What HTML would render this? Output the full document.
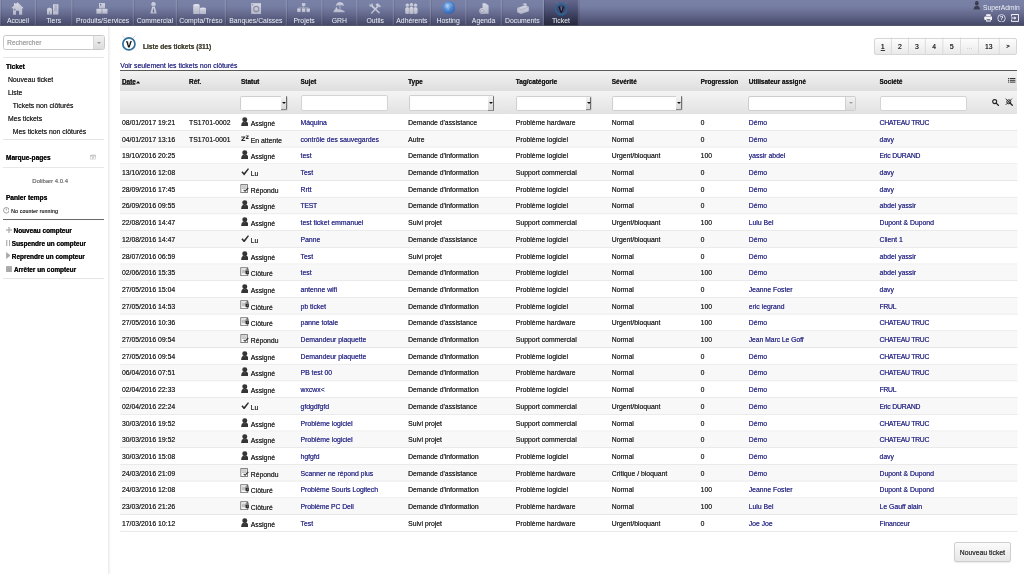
<!DOCTYPE html><html><head><meta charset="utf-8"><title>Tickets</title><style>
*{margin:0;padding:0;box-sizing:border-box}
html,body{width:1024px;height:574px;overflow:hidden;background:#fff}
body{font-family:"Liberation Sans",sans-serif;color:#303030;position:relative}
.t{position:absolute;white-space:nowrap;line-height:1.117;text-shadow:0.07px 0 0 currentColor}
#w{position:absolute;left:0;top:0;width:1024px;height:574px;will-change:transform;overflow:hidden;background:#fff}
.b{font-weight:bold}
.lk{color:#36368e}
.nv{color:#eef0f6}
.abs{position:absolute}
svg{position:absolute;left:0;top:0}
</style></head><body><div id="w">
<div class="abs" style="left:0;top:0;width:1024px;height:25.6px;background:linear-gradient(to bottom,#7981a6 0%,#767ea3 25%,#62678b 58%,#4c4f70 88%,#45475f 100%)"></div>
<div class="abs" style="left:544px;top:0;width:35px;height:25.6px;background:linear-gradient(to bottom,#62678b 0%,#50547a 30%,#383b58 65%,#25273a 100%)"></div>
<svg width="1024" height="26" style="top:0"><rect x="-0.19999999999999996" y="0" width="1.1" height="25" fill="#ffffff" opacity="0.17"/><rect x="0.9" y="0" width="0.9" height="25" fill="#000" opacity="0.10"/><rect x="34.8" y="0" width="1.1" height="25" fill="#ffffff" opacity="0.17"/><rect x="35.9" y="0" width="0.9" height="25" fill="#000" opacity="0.10"/><rect x="71.3" y="0" width="1.1" height="25" fill="#ffffff" opacity="0.17"/><rect x="72.4" y="0" width="0.9" height="25" fill="#000" opacity="0.10"/><rect x="132.8" y="0" width="1.1" height="25" fill="#ffffff" opacity="0.17"/><rect x="133.9" y="0" width="0.9" height="25" fill="#000" opacity="0.10"/><rect x="175.8" y="0" width="1.1" height="25" fill="#ffffff" opacity="0.17"/><rect x="176.9" y="0" width="0.9" height="25" fill="#000" opacity="0.10"/><rect x="224.8" y="0" width="1.1" height="25" fill="#ffffff" opacity="0.17"/><rect x="225.9" y="0" width="0.9" height="25" fill="#000" opacity="0.10"/><rect x="285.8" y="0" width="1.1" height="25" fill="#ffffff" opacity="0.17"/><rect x="286.9" y="0" width="0.9" height="25" fill="#000" opacity="0.10"/><rect x="321.3" y="0" width="1.1" height="25" fill="#ffffff" opacity="0.17"/><rect x="322.4" y="0" width="0.9" height="25" fill="#000" opacity="0.10"/><rect x="356.3" y="0" width="1.1" height="25" fill="#ffffff" opacity="0.17"/><rect x="357.4" y="0" width="0.9" height="25" fill="#000" opacity="0.10"/><rect x="392.8" y="0" width="1.1" height="25" fill="#ffffff" opacity="0.17"/><rect x="393.9" y="0" width="0.9" height="25" fill="#000" opacity="0.10"/><rect x="429.8" y="0" width="1.1" height="25" fill="#ffffff" opacity="0.17"/><rect x="430.9" y="0" width="0.9" height="25" fill="#000" opacity="0.10"/><rect x="465.3" y="0" width="1.1" height="25" fill="#ffffff" opacity="0.17"/><rect x="466.4" y="0" width="0.9" height="25" fill="#000" opacity="0.10"/><rect x="500.8" y="0" width="1.1" height="25" fill="#ffffff" opacity="0.17"/><rect x="501.9" y="0" width="0.9" height="25" fill="#000" opacity="0.10"/><rect x="542.8" y="0" width="1.1" height="25" fill="#ffffff" opacity="0.17"/><rect x="543.9" y="0" width="0.9" height="25" fill="#000" opacity="0.10"/><rect x="577.8" y="0" width="1.1" height="25" fill="#ffffff" opacity="0.17"/><rect x="578.9" y="0" width="0.9" height="25" fill="#000" opacity="0.10"/></svg>
<div class="abs" style="left:0;top:24.6px;width:1024px;height:1px;background:#5e6074;opacity:0.6"></div>
<span class="t nv" style="left:-4.60px;width:45px;text-align:center;top:17.00px;font-size:6.85px;text-shadow:none">Accueil</span>
<span class="t nv" style="left:30.40px;width:46.5px;text-align:center;top:17.00px;font-size:6.85px;text-shadow:none">Tiers</span>
<span class="t nv" style="left:66.90px;width:71.5px;text-align:center;top:17.00px;font-size:6.85px;text-shadow:none">Produits/Services</span>
<span class="t nv" style="left:128.40px;width:53px;text-align:center;top:17.00px;font-size:6.85px;text-shadow:none">Commercial</span>
<span class="t nv" style="left:171.40px;width:59px;text-align:center;top:17.00px;font-size:6.85px;text-shadow:none">Compta/Tréso</span>
<span class="t nv" style="left:220.40px;width:71px;text-align:center;top:17.00px;font-size:6.85px;text-shadow:none">Banques/Caisses</span>
<span class="t nv" style="left:281.40px;width:45.5px;text-align:center;top:17.00px;font-size:6.85px;text-shadow:none">Projets</span>
<span class="t nv" style="left:316.90px;width:45.0px;text-align:center;top:17.00px;font-size:6.85px;text-shadow:none">GRH</span>
<span class="t nv" style="left:351.90px;width:46.5px;text-align:center;top:17.00px;font-size:6.85px;text-shadow:none">Outils</span>
<span class="t nv" style="left:388.40px;width:47px;text-align:center;top:17.00px;font-size:6.85px;text-shadow:none">Adhérents</span>
<span class="t nv" style="left:425.40px;width:45.5px;text-align:center;top:17.00px;font-size:6.85px;text-shadow:none">Hosting</span>
<span class="t nv" style="left:460.90px;width:45.5px;text-align:center;top:17.00px;font-size:6.85px;text-shadow:none">Agenda</span>
<span class="t nv" style="left:496.40px;width:52px;text-align:center;top:17.00px;font-size:6.85px;text-shadow:none">Documents</span>
<span class="t nv" style="left:538.40px;width:45px;text-align:center;top:17.00px;font-size:6.85px;text-shadow:none">Ticket</span>
<svg width="0" height="0" style="position:absolute"><defs><linearGradient id="ng" x1="0" y1="0" x2="0" y2="1"><stop offset="0" stop-color="#ececf2"/><stop offset="1" stop-color="#c4c6d4"/></linearGradient></defs></svg><div style="position:absolute;left:0;top:0;opacity:0.82"><svg style="position:absolute;left:11px;top:1.5px;" width="13" height="13" viewBox="0 0 13 13"><path fill="url(#ng)" d="M6.5 0.3 L12.8 6.2 L11.2 6.2 L11.2 12.8 L8 12.8 L8 8.8 L5 8.8 L5 12.8 L2 12.8 L2 6.2 L0.2 6.2 L3 3.6 L3 1 L4.5 1 L4.5 2.2 Z"/><rect x="2.6" y="6.8" width="2" height="1.6" fill="#8c90aa"/></svg><svg style="position:absolute;left:47px;top:3.5px;" width="12" height="11" viewBox="0 0 12 11"><rect fill="url(#ng)" x="6" y="0.3" width="5.4" height="10.3"/><path fill="url(#ng)" d="M0 10.6 L0 4.8 L2.5 3.6 L5 4.8 L5 10.6 Z"/><rect x="7.3" y="1.6" width="2.8" height="1" fill="#9a9db5"/><rect x="7.3" y="3.6" width="2.8" height="1" fill="#9a9db5"/><rect x="7.3" y="5.6" width="2.8" height="1" fill="#9a9db5"/><rect x="2" y="7.5" width="1" height="3" fill="#9a9db5"/></svg><svg style="position:absolute;left:95.5px;top:3.3px;" width="12" height="11" viewBox="0 0 12 11"><rect fill="url(#ng)" x="3" y="0.2" width="6" height="5.2"/><rect x="4" y="1.2" width="1.3" height="1.2" fill="#555a78"/><rect fill="url(#ng)" x="0.4" y="5.8" width="5.3" height="4.9"/><rect fill="url(#ng)" x="6.2" y="5.8" width="5.3" height="4.9"/></svg><svg style="position:absolute;left:150.3px;top:1.8px;" width="7" height="12" viewBox="0 0 7 12"><circle fill="url(#ng)" cx="3.5" cy="2.3" r="2.2"/><path fill="url(#ng)" d="M2.2 4.8 L4.8 4.8 L6.8 11.6 L0.2 11.6 Z"/><path d="M3.5 5.3 L4.3 9.5 L3.5 11 L2.7 9.5 Z" fill="#6a6f8e"/></svg><svg style="position:absolute;left:193.3px;top:3.8px;" width="13.2" height="10.5" viewBox="0 0 13.2 10.5"><rect fill="url(#ng)" x="0.2" y="0.8" width="6.5" height="9.5" rx="1"/><ellipse cx="3.45" cy="1" rx="3.2" ry="0.9" fill="#f8f8fb"/><rect fill="url(#ng)" x="6.8" y="4" width="6.2" height="6.3" rx="1"/><ellipse cx="9.9" cy="4.2" rx="3" ry="0.8" fill="#f8f8fb"/></svg><svg style="position:absolute;left:250.8px;top:2.8px;" width="10.6" height="11.4" viewBox="0 0 10.6 11.4"><rect fill="url(#ng)" x="0.2" y="0.2" width="10.2" height="11"/><circle cx="5.3" cy="6" r="2.6" fill="none" stroke="#8d90a8" stroke-width="1.1"/><circle cx="1.8" cy="1.8" r="0.6" fill="#6d7190"/></svg><svg style="position:absolute;left:297.4px;top:3.3px;" width="13" height="9.3" viewBox="0 0 13 9.3"><rect fill="url(#ng)" x="4.9" y="0.2" width="3.4" height="3"/><rect x="6.3" y="3" width="0.6" height="2" fill="#c8cad6"/><rect x="1.5" y="4.6" width="10" height="0.6" fill="#c8cad6"/><rect fill="url(#ng)" x="0.2" y="5.5" width="3.4" height="3.6"/><rect fill="url(#ng)" x="4.9" y="5.5" width="3.4" height="3.6"/><rect fill="url(#ng)" x="9.5" y="5.5" width="3.4" height="3.6"/></svg><svg style="position:absolute;left:332.8px;top:2.4px;" width="12" height="10.4" viewBox="0 0 12 10.4"><path fill="url(#ng)" d="M3 3.8 Q3.2 0.2 7 0.2 Q10.8 0.2 11 3.8 Q7 2.8 3 3.8 Z"/><rect x="6.6" y="3.2" width="0.7" height="4.2" fill="#d8d9e4"/><path fill="url(#ng)" d="M0.2 10.2 Q0.8 7.6 2.4 7.2 L2.8 5.6 Q3.6 5 4.2 6 L4.4 7.2 Q8 6.8 11.6 9.2 L11.8 10.2 Z"/></svg><svg style="position:absolute;left:368.5px;top:3.3px;" width="12.2" height="10.8" viewBox="0 0 12.2 10.8"><path d="M2.2 2.4 L10.6 10.2" stroke="url(#ng)" stroke-width="1.6"/><path d="M1 0.6 Q-0.4 2.6 1.4 3.8 Q3 4.4 3.8 3 Q4.6 1.2 2.6 0.2 L2.4 1.8 L1.4 2 Z" fill="url(#ng)"/><path d="M9.6 2.6 L2.2 10.4" stroke="url(#ng)" stroke-width="1.5"/><path fill="url(#ng)" d="M6.6 1.6 L8.6 0.2 L12 3.2 L10.8 4.6 L9.4 3.6 L8.4 4.2 Z"/></svg><svg style="position:absolute;left:405.3px;top:2.5px;" width="12.8" height="11.4" viewBox="0 0 12.8 11.4"><circle fill="url(#ng)" cx="2.3" cy="2.3" r="1.7"/><circle fill="url(#ng)" cx="10.5" cy="2.3" r="1.7"/><rect fill="url(#ng)" x="0.2" y="4.3" width="4.2" height="6.6" rx="1.6"/><rect fill="url(#ng)" x="8.4" y="4.3" width="4.2" height="6.6" rx="1.6"/><circle fill="url(#ng)" cx="6.4" cy="1.9" r="1.8"/><rect fill="url(#ng)" x="4.2" y="4" width="4.4" height="7.2" rx="1.7"/><path d="M4.2 4.6 L4.2 10 M8.6 4.6 L8.6 10" stroke="#8a8eaa" stroke-width="0.4"/></svg><svg style="position:absolute;left:441.8px;top:0.8px;" width="13.6" height="13.6" viewBox="0 0 13.6 13.6"><defs><radialGradient id="gl" cx="0.4" cy="0.35" r="0.7"><stop offset="0" stop-color="#c4e2ff"/><stop offset="0.45" stop-color="#4a90e2"/><stop offset="1" stop-color="#2a5cb0"/></radialGradient></defs><circle cx="6.8" cy="6.8" r="6.4" fill="url(#gl)"/><path d="M4 3 Q6 4 5 6 Q7 7 6 9.5 M8.5 2.5 Q9.5 4.5 10.5 5" stroke="#c8e0f8" stroke-width="0.6" fill="none" opacity="0.8"/></svg><svg style="position:absolute;left:478.5px;top:2.5px;" width="10" height="11.4" viewBox="0 0 10 11.4"><path fill="url(#ng)" d="M3.5 0.3 L6.5 0.3 L9.6 2.5 L9.6 10.8 L3.5 10.8 Z"/><circle fill="url(#ng)" cx="3.2" cy="8" r="2.9"/><circle cx="3.2" cy="8" r="1.8" fill="none" stroke="#9a9db5" stroke-width="0.6"/></svg><svg style="position:absolute;left:516.8px;top:2.5px;" width="12" height="11.4" viewBox="0 0 12 11.4"><path fill="url(#ng)" d="M0.2 5 L8 2.2 L11.8 4 L11.8 8.2 L4 11 L0.2 9.2 Z"/><path d="M5 1 L9 0.3 L10 2.8" fill="#e8e8ee"/><path d="M0.2 5 L4 6.8 L11.8 4" stroke="#a6a9bf" stroke-width="0.5" fill="none"/></svg></div><svg style="position:absolute;left:551.8px;top:-0.2px;" width="18.6" height="18.6" viewBox="0 0 18.6 18.6"><circle cx="9.3" cy="9.3" r="5.45" fill="#464a6a" stroke="#2a6598" stroke-width="1.7"/><path d="M6.4 6.4 L7.800000000000001 6.4 L9.3 10.9 L10.8 6.4 L12.200000000000001 6.4 L10.100000000000001 12.8 L8.5 12.8 Z" fill="#14142a"/><path d="M9.3 7.1000000000000005 L9.3 10.5" stroke="#8a8fb0" stroke-width="0.7"/><path d="M3.400000000000001 1.600000000000001 L6.000000000000001 4.300000000000001 M15.200000000000001 1.600000000000001 L12.600000000000001 4.300000000000001" stroke="#7c809c" stroke-width="0.55" opacity="0.8"/></svg>
<span class="t nv" style="left:983.00px;top:4.14px;font-size:6.7px;text-shadow:none">SuperAdmin</span>
<div class="abs" style="left:108px;top:25.6px;width:3.2px;height:549px;background:linear-gradient(to right,#e9e9e9,#f3f3f3 40%,#ffffff)"></div>
<div class="abs" style="left:3.3px;top:35.3px;width:101.4px;height:14.5px;border:1px solid #c8c8c8;border-radius:2.5px;background:#fff;overflow:hidden"><div class="abs" style="right:0;top:0;width:11px;height:100%;background:linear-gradient(#f0f0f0,#dcdcdc);border-left:1px solid #d8d8d8"></div></div>
<div class="abs" style="left:96.7px;top:41.8px;width:0;height:0;border-left:2px solid transparent;border-right:2px solid transparent;border-top:2.6px solid #9a9a9a"></div>
<span class="t " style="left:7.10px;top:38.89px;font-size:6.64px;color:#a8a8a8">Rechercher</span>
<div class="abs" style="left:3px;top:57px;width:101px;height:1px;background:#e4e4e4"></div>
<span class="t b" style="left:6.00px;top:62.88px;font-size:6.54px;color:#111">Ticket</span>
<span class="t " style="left:7.90px;top:76.00px;font-size:6.85px;">Nouveau ticket</span>
<span class="t " style="left:7.90px;top:88.90px;font-size:6.85px;">Liste</span>
<span class="t " style="left:12.80px;top:101.80px;font-size:6.85px;">Tickets non clôturés</span>
<span class="t " style="left:7.90px;top:114.80px;font-size:6.85px;">Mes tickets</span>
<span class="t " style="left:12.80px;top:127.70px;font-size:6.85px;">Mes tickets non clôturés</span>
<div class="abs" style="left:3px;top:139px;width:101px;height:1px;background:#e4e4e4"></div>
<span class="t b" style="left:5.90px;top:154.13px;font-size:6.6px;color:#111">Marque-pages</span>
<div class="abs" style="left:3px;top:167px;width:101px;height:1px;background:#e8e8e8"></div>
<span class="t " style="left:32.30px;top:177.62px;font-size:5.95px;color:#7a7a7a">Dolibarr 4.0.4</span>
<span class="t b" style="left:5.90px;top:194.43px;font-size:6.6px;color:#111">Panier temps</span>
<span class="t " style="left:11.10px;top:209.00px;font-size:5.3px;letter-spacing:0.1px;color:#333">No counter running</span>
<div class="abs" style="left:3px;top:219px;width:101px;height:1px;background:#6a6a6a"></div>
<span class="t b" style="left:13.50px;top:227.16px;font-size:6.45px;color:#111">Nouveau compteur</span>
<span class="t b" style="left:11.80px;top:240.26px;font-size:6.45px;color:#111">Suspendre un compteur</span>
<span class="t b" style="left:11.80px;top:253.26px;font-size:6.45px;color:#111">Reprendre un compteur</span>
<span class="t b" style="left:13.90px;top:265.76px;font-size:6.45px;color:#111">Arrêter un compteur</span>
<div class="abs" style="left:3px;top:278px;width:101px;height:1px;background:#e4e4e4"></div>
<span class="t b" style="left:143.00px;top:42.83px;font-size:6.6px;color:#4a4838">Liste des tickets (311)</span>
<svg style="position:absolute;left:119.2px;top:34.0px;" width="19.8" height="19.8" viewBox="0 0 19.8 19.8"><circle cx="9.9" cy="9.9" r="6.050000000000001" fill="#ffffff" stroke="#2f6f9f" stroke-width="1.7"/><path d="M7.0 7.0 L8.4 7.0 L9.9 11.5 L11.4 7.0 L12.8 7.0 L10.700000000000001 13.4 L9.1 13.4 Z" fill="#1a1a1a"/><path d="M9.9 7.7 L9.9 11.1" stroke="#9a9a9a" stroke-width="0.7"/><path d="M3.4 1.6 L6.0 4.3 M16.400000000000002 1.6 L13.8 4.3" stroke="#9a9a9a" stroke-width="0.55" opacity="0.8"/></svg>
<div class="abs" style="left:874.2px;top:37.5px;width:142.6px;height:17.2px;border:1px solid #d6d6d6;border-radius:2px;background:linear-gradient(#fdfdfd,#e9e9e9)"></div>
<svg width="1024" height="60" style="top:0"><rect x="890.9" y="37.5" width="0.8" height="17.2" fill="#d6d6d6"/><rect x="908.1" y="37.5" width="0.8" height="17.2" fill="#d6d6d6"/><rect x="924.85" y="37.5" width="0.8" height="17.2" fill="#d6d6d6"/><rect x="942.5" y="37.5" width="0.8" height="17.2" fill="#d6d6d6"/><rect x="960.2" y="37.5" width="0.8" height="17.2" fill="#d6d6d6"/><rect x="978.0" y="37.5" width="0.8" height="17.2" fill="#d6d6d6"/><rect x="998.8000000000001" y="37.5" width="0.8" height="17.2" fill="#d6d6d6"/></svg>
<span class="t " style="left:874.20px;width:17.09999999999991px;text-align:center;top:42.60px;font-size:6.85px;color:#333;text-decoration:underline">1</span>
<span class="t " style="left:891.30px;width:17.200000000000045px;text-align:center;top:42.60px;font-size:6.85px;color:#333">2</span>
<span class="t " style="left:908.50px;width:16.75px;text-align:center;top:42.60px;font-size:6.85px;color:#333">3</span>
<span class="t " style="left:925.25px;width:17.649999999999977px;text-align:center;top:42.60px;font-size:6.85px;color:#333">4</span>
<span class="t " style="left:942.90px;width:17.700000000000045px;text-align:center;top:42.60px;font-size:6.85px;color:#333">5</span>
<span class="t " style="left:960.60px;width:17.799999999999955px;text-align:center;top:42.60px;font-size:6.85px;color:#c8c8c8">...</span>
<span class="t " style="left:978.40px;width:20.800000000000068px;text-align:center;top:42.60px;font-size:6.85px;color:#333">13</span>
<span class="t b" style="left:999.20px;width:17.59999999999991px;text-align:center;top:43.33px;font-size:5.6px;color:#333">&gt;</span>
<span class="t lk" style="left:120.20px;top:61.96px;font-size:6.9px;">Voir seulement les tickets non clôturés</span>
<div class="abs" style="left:120.2px;top:70px;width:897.1999999999999px;height:1px;background:#5a5a5a"></div>
<div class="abs" style="left:120.2px;top:71px;width:897.1999999999999px;height:19.7px;background:linear-gradient(#f2f2f2,#dedede)"></div>
<div class="abs" style="left:120.2px;top:90.7px;width:897.1999999999999px;height:23.6px;background:linear-gradient(#f4f4f4,#e2e2e2)"></div>
<span class="t b" style="left:121.90px;top:78.37px;font-size:6.44px;color:#222">Date</span>
<span class="t b" style="left:189.00px;top:78.37px;font-size:6.44px;color:#222">Réf.</span>
<span class="t b" style="left:241.00px;top:78.37px;font-size:6.44px;color:#222">Statut</span>
<span class="t b" style="left:300.50px;top:78.37px;font-size:6.44px;color:#222">Sujet</span>
<span class="t b" style="left:408.10px;top:78.37px;font-size:6.44px;color:#222">Type</span>
<span class="t b" style="left:515.80px;top:78.37px;font-size:6.44px;color:#222">Tag/catégorie</span>
<span class="t b" style="left:611.70px;top:78.37px;font-size:6.44px;color:#222">Sévérité</span>
<span class="t b" style="left:700.60px;top:78.37px;font-size:6.44px;color:#222">Progression</span>
<span class="t b" style="left:748.70px;top:78.37px;font-size:6.44px;color:#222">Utilisateur assigné</span>
<span class="t b" style="left:879.50px;top:78.37px;font-size:6.44px;color:#222">Société</span>
<div style="position:absolute;left:240.4px;top:95.5px;width:47.20px;height:15.40px;background:#fff;border:1px solid #cfcfcf;border-radius:1.5px;box-shadow:inset 0 0 1px #e6e6e6"></div><div style="position:absolute;left:281.00px;top:96.30px;width:5.8px;height:13.80px;background:linear-gradient(#f4f4f4,#d8d8d8);border-right:1.3px solid #6e6e6e;border-bottom:1px solid #8a8a8a;border-radius:0 1px 1px 0"></div><div style="position:absolute;left:282.10px;top:102.10px;width:0;height:0;border-left:2.1px solid transparent;border-right:2.1px solid transparent;border-top:2.6px solid #111"></div>
<div style="position:absolute;left:300.7px;top:95.4px;width:87.00px;height:15.20px;background:#fff;border:1px solid #d4d4d4;border-radius:2px"></div>
<div style="position:absolute;left:408.6px;top:95.4px;width:85.90px;height:16.10px;background:#fff;border:1px solid #cfcfcf;border-radius:1.5px;box-shadow:inset 0 0 1px #e6e6e6"></div><div style="position:absolute;left:487.90px;top:96.20px;width:5.8px;height:14.50px;background:linear-gradient(#f4f4f4,#d8d8d8);border-right:1.3px solid #6e6e6e;border-bottom:1px solid #8a8a8a;border-radius:0 1px 1px 0"></div><div style="position:absolute;left:489.00px;top:102.35px;width:0;height:0;border-left:2.1px solid transparent;border-right:2.1px solid transparent;border-top:2.6px solid #111"></div>
<div style="position:absolute;left:515.8px;top:95.7px;width:76.50px;height:15.20px;background:#fff;border:1px solid #cfcfcf;border-radius:1.5px;box-shadow:inset 0 0 1px #e6e6e6"></div><div style="position:absolute;left:585.70px;top:96.50px;width:5.8px;height:13.60px;background:linear-gradient(#f4f4f4,#d8d8d8);border-right:1.3px solid #6e6e6e;border-bottom:1px solid #8a8a8a;border-radius:0 1px 1px 0"></div><div style="position:absolute;left:586.80px;top:102.20px;width:0;height:0;border-left:2.1px solid transparent;border-right:2.1px solid transparent;border-top:2.6px solid #111"></div>
<div style="position:absolute;left:611.5px;top:95.6px;width:71.10px;height:15.50px;background:#fff;border:1px solid #cfcfcf;border-radius:1.5px;box-shadow:inset 0 0 1px #e6e6e6"></div><div style="position:absolute;left:676.00px;top:96.40px;width:5.8px;height:13.90px;background:linear-gradient(#f4f4f4,#d8d8d8);border-right:1.3px solid #6e6e6e;border-bottom:1px solid #8a8a8a;border-radius:0 1px 1px 0"></div><div style="position:absolute;left:677.10px;top:102.25px;width:0;height:0;border-left:2.1px solid transparent;border-right:2.1px solid transparent;border-top:2.6px solid #111"></div>
<div style="position:absolute;left:748.3px;top:96.1px;width:107.30px;height:14.70px;background:#fff;border:1px solid #cdcdcd;border-radius:2px;overflow:hidden"><div style="position:absolute;right:0;top:0;width:10px;height:100%;background:linear-gradient(#f2f2f2,#dcdcdc);border-left:1px solid #d0d0d0"></div></div><div style="position:absolute;left:848.80px;top:102.45px;width:0;height:0;border-left:2.2px solid transparent;border-right:2.2px solid transparent;border-top:2.8px solid #a0a0a0"></div>
<div style="position:absolute;left:880px;top:95.6px;width:87.40px;height:15.30px;background:#fff;border:1px solid #d4d4d4;border-radius:2px"></div>
<svg style="position:absolute;left:1008px;top:77.8px;" width="7.6" height="4.8" viewBox="0 0 7.6 4.8"><rect x="0" y="0" width="1.3" height="1" fill="#333"/><rect x="0" y="1.8" width="1.3" height="1" fill="#333"/><rect x="0" y="3.6" width="1.3" height="1" fill="#333"/><rect x="2" y="0" width="5.4" height="1" fill="#333"/><rect x="2" y="1.8" width="5.4" height="1" fill="#333"/><rect x="2" y="3.6" width="5.4" height="1" fill="#333"/></svg><svg style="position:absolute;left:991.5px;top:98.6px;" width="7.6" height="7.2" viewBox="0 0 7.6 7.2"><circle cx="2.7" cy="2.6" r="2" fill="none" stroke="#222" stroke-width="1.1"/><path d="M4.2 4.1 L6.9 6.8" stroke="#222" stroke-width="1.3"/></svg><svg style="position:absolute;left:1005px;top:97.6px;" width="8" height="8" viewBox="0 0 8 8"><circle cx="3.8" cy="3.8" r="2" fill="none" stroke="#222" stroke-width="1"/><path d="M0.6 0.6 L7.4 7.4 M7 0.6 L0.6 7" stroke="#222" stroke-width="0.8"/><path d="M5.3 5.3 L7.6 7.6" stroke="#222" stroke-width="1.3"/></svg><svg style="position:absolute;left:135.9px;top:81.3px;" width="4.2" height="2.6" viewBox="0 0 4.2 2.6"><path d="M0 2.5 L2.1 0 L4.2 2.5 Z" fill="#111"/></svg><svg style="position:absolute;left:972.8px;top:1px;" width="7.6" height="8.8" viewBox="0 0 7.6 8.8"><circle cx="3.8" cy="2.6" r="1.9" fill="#3b3e4e"/><path d="M0.6 8.6 Q0.8 5 3.8 4.8 Q6.8 5 7 8.6 Z" fill="#3b3e4e"/><path d="M2.2 1.2 Q3.8 -0.5 5.4 1.2" stroke="#2a2c38" stroke-width="0.8" fill="none"/></svg><svg style="position:absolute;left:983.6px;top:14.2px;" width="8.8" height="7.8" viewBox="0 0 8.8 7.8"><rect x="2.2" y="0.2" width="4.4" height="1.8" fill="#f2f2f6"/><rect x="0.2" y="2.4" width="8.4" height="3.6" rx="1" fill="#f2f2f6"/><rect x="2" y="5" width="4.8" height="2.6" fill="#f2f2f6"/><rect x="2.6" y="5.2" width="3.6" height="1.3" fill="#5a5e7c"/></svg><svg style="position:absolute;left:997px;top:13.8px;" width="9" height="8.6" viewBox="0 0 9 8.6"><circle cx="4.5" cy="4.3" r="3.75" fill="none" stroke="#eeeef4" stroke-width="0.8"/><text x="4.55" y="6.5" font-family="Liberation Sans" font-weight="bold" font-size="6" text-anchor="middle" fill="#eeeef4">?</text></svg><svg style="position:absolute;left:1010.8px;top:14.2px;" width="8.2" height="8" viewBox="0 0 8.2 8"><path d="M0.5 2.5 L0.5 0.5 L7.6 0.5 L7.6 7.4 L0.5 7.4 L0.5 5.5" fill="none" stroke="#f2f2f6" stroke-width="1"/><path d="M0.2 4 L4.5 4" stroke="#f2f2f6" stroke-width="1"/><path d="M3.4 2.2 L5.4 4 L3.4 5.8 Z" fill="#f2f2f6"/></svg><svg style="position:absolute;left:89.8px;top:154.4px;" width="6.2" height="5.4" viewBox="0 0 6.2 5.4"><rect x="0.5" y="1.5" width="5.2" height="3.6" fill="none" stroke="#c4c4c4" stroke-width="0.6"/><rect x="0.5" y="1.5" width="5.2" height="1" fill="#b8b8b8"/><rect x="2" y="3" width="2" height="1.6" fill="#c8c8c8"/><path d="M0.5 0.4 L5.7 0.4" stroke="#d4d4d4" stroke-width="0.5"/></svg><svg style="position:absolute;left:2.6px;top:207px;" width="6.6" height="6.6" viewBox="0 0 6.6 6.6"><circle cx="3.3" cy="3.3" r="2.8" fill="none" stroke="#666" stroke-width="0.6"/><path d="M3.3 1.5 L3.3 3.5" stroke="#666" stroke-width="0.6"/></svg><svg style="position:absolute;left:5.5px;top:227px;" width="6" height="6" viewBox="0 0 6 6"><rect x="2.4" y="0" width="1.2" height="6" fill="#a8a8a8"/><rect x="0" y="2.4" width="6" height="1.2" fill="#a8a8a8"/></svg><svg style="position:absolute;left:5.5px;top:239.7px;" width="4.4" height="6.4" viewBox="0 0 4.4 6.4"><rect x="0.2" y="0" width="1.1" height="6.4" fill="#a8a8a8"/><rect x="3" y="0" width="1.1" height="6.4" fill="#a8a8a8"/></svg><svg style="position:absolute;left:5.5px;top:252.2px;" width="4.6" height="7" viewBox="0 0 4.6 7"><path d="M0.1 0 L4.5 3.5 L0.1 7 Z" fill="#a8a8a8"/></svg><svg style="position:absolute;left:5.5px;top:265.6px;" width="6" height="6.2" viewBox="0 0 6 6.2"><rect x="0.1" y="0.1" width="5.8" height="6" fill="#a8a8a8"/></svg>
<svg width="1024" height="100" style="top:0"><rect x="121.8" y="84.1" width="13.6" height="0.75" fill="#2a2a2a"/></svg>
<svg width="1024" height="574" style="top:0"><rect x="120.2" y="114.20" width="897.20" height="16.7" fill="#ffffff"/><rect x="120.2" y="130.10" width="897.20" height="0.8" fill="#e2e2e2"/><rect x="120.2" y="130.90" width="897.20" height="16.7" fill="#f8f8f8"/><rect x="120.2" y="146.80" width="897.20" height="0.8" fill="#e2e2e2"/><rect x="120.2" y="147.60" width="897.20" height="16.7" fill="#ffffff"/><rect x="120.2" y="163.50" width="897.20" height="0.8" fill="#e2e2e2"/><rect x="120.2" y="164.30" width="897.20" height="16.7" fill="#f8f8f8"/><rect x="120.2" y="180.20" width="897.20" height="0.8" fill="#e2e2e2"/><rect x="120.2" y="181.00" width="897.20" height="16.7" fill="#ffffff"/><rect x="120.2" y="196.90" width="897.20" height="0.8" fill="#e2e2e2"/><rect x="120.2" y="197.70" width="897.20" height="16.7" fill="#f8f8f8"/><rect x="120.2" y="213.60" width="897.20" height="0.8" fill="#e2e2e2"/><rect x="120.2" y="214.40" width="897.20" height="16.7" fill="#ffffff"/><rect x="120.2" y="230.30" width="897.20" height="0.8" fill="#e2e2e2"/><rect x="120.2" y="231.10" width="897.20" height="16.7" fill="#f8f8f8"/><rect x="120.2" y="247.00" width="897.20" height="0.8" fill="#e2e2e2"/><rect x="120.2" y="247.80" width="897.20" height="16.7" fill="#ffffff"/><rect x="120.2" y="263.70" width="897.20" height="0.8" fill="#e2e2e2"/><rect x="120.2" y="264.50" width="897.20" height="16.7" fill="#f8f8f8"/><rect x="120.2" y="280.40" width="897.20" height="0.8" fill="#e2e2e2"/><rect x="120.2" y="281.20" width="897.20" height="16.7" fill="#ffffff"/><rect x="120.2" y="297.10" width="897.20" height="0.8" fill="#e2e2e2"/><rect x="120.2" y="297.90" width="897.20" height="16.7" fill="#f8f8f8"/><rect x="120.2" y="313.80" width="897.20" height="0.8" fill="#e2e2e2"/><rect x="120.2" y="314.60" width="897.20" height="16.7" fill="#ffffff"/><rect x="120.2" y="330.50" width="897.20" height="0.8" fill="#e2e2e2"/><rect x="120.2" y="331.30" width="897.20" height="16.7" fill="#f8f8f8"/><rect x="120.2" y="347.20" width="897.20" height="0.8" fill="#e2e2e2"/><rect x="120.2" y="348.00" width="897.20" height="16.7" fill="#ffffff"/><rect x="120.2" y="363.90" width="897.20" height="0.8" fill="#e2e2e2"/><rect x="120.2" y="364.70" width="897.20" height="16.7" fill="#f8f8f8"/><rect x="120.2" y="380.60" width="897.20" height="0.8" fill="#e2e2e2"/><rect x="120.2" y="381.40" width="897.20" height="16.7" fill="#ffffff"/><rect x="120.2" y="397.30" width="897.20" height="0.8" fill="#e2e2e2"/><rect x="120.2" y="398.10" width="897.20" height="16.7" fill="#f8f8f8"/><rect x="120.2" y="414.00" width="897.20" height="0.8" fill="#e2e2e2"/><rect x="120.2" y="414.80" width="897.20" height="16.7" fill="#ffffff"/><rect x="120.2" y="430.70" width="897.20" height="0.8" fill="#e2e2e2"/><rect x="120.2" y="431.50" width="897.20" height="16.7" fill="#f8f8f8"/><rect x="120.2" y="447.40" width="897.20" height="0.8" fill="#e2e2e2"/><rect x="120.2" y="448.20" width="897.20" height="16.7" fill="#ffffff"/><rect x="120.2" y="464.10" width="897.20" height="0.8" fill="#e2e2e2"/><rect x="120.2" y="464.90" width="897.20" height="16.7" fill="#f8f8f8"/><rect x="120.2" y="480.80" width="897.20" height="0.8" fill="#e2e2e2"/><rect x="120.2" y="481.60" width="897.20" height="16.7" fill="#ffffff"/><rect x="120.2" y="497.50" width="897.20" height="0.8" fill="#e2e2e2"/><rect x="120.2" y="498.30" width="897.20" height="16.7" fill="#f8f8f8"/><rect x="120.2" y="514.20" width="897.20" height="0.8" fill="#e2e2e2"/><rect x="120.2" y="515.00" width="897.20" height="16.7" fill="#ffffff"/><rect x="120.2" y="530.90" width="897.20" height="0.8" fill="#e2e2e2"/></svg>
<span class="t " style="left:121.90px;top:118.90px;font-size:6.85px;">08/01/2017 19:21</span>
<span class="t " style="left:189.00px;top:118.90px;font-size:6.85px;">TS1701-0002</span>
<span class="t " style="left:250.70px;top:119.90px;font-size:6.85px;">Assigné</span>
<svg style="position:absolute;left:240.8px;top:116.9px;" width="7.6" height="9.2" viewBox="0 0 7.6 9.2"><circle cx="3.8" cy="2.7" r="2.5" fill="#353535"/><path d="M0.1 9.1 Q0.2 5.6 2 4.8 Q3.8 5.8 5.6 4.8 Q7.4 5.6 7.5 9.1 Z" fill="#353535"/></svg>
<span class="t lk" style="left:300.50px;top:118.90px;font-size:6.85px;">Máquina</span>
<span class="t " style="left:408.10px;top:118.90px;font-size:6.85px;">Demande d'assistance</span>
<span class="t " style="left:515.80px;top:118.90px;font-size:6.85px;">Problème hardware</span>
<span class="t " style="left:611.70px;top:118.90px;font-size:6.85px;">Normal</span>
<span class="t " style="left:700.60px;top:118.90px;font-size:6.85px;">0</span>
<span class="t lk" style="left:748.70px;top:118.90px;font-size:6.85px;">Démo</span>
<span class="t lk" style="left:879.50px;top:118.90px;font-size:6.85px;;letter-spacing:-0.284px">CHATEAU TRUC</span>
<span class="t " style="left:121.90px;top:135.60px;font-size:6.85px;">04/01/2017 13:16</span>
<span class="t " style="left:189.00px;top:135.60px;font-size:6.85px;">TS1701-0001</span>
<span class="t " style="left:250.70px;top:136.60px;font-size:6.85px;">En attente</span>
<svg style="position:absolute;left:240.8px;top:134.70000000000002px;" width="8.4" height="7" viewBox="0 0 8.4 7"><path d="M0.30 1.40 L4.20 1.40 L4.20 2.50 L1.84 5.00 L4.20 5.00 L4.20 6.10 L0.30 6.10 L0.30 5.00 L2.66 2.50 L0.30 2.50 Z" fill="#2e2e2e"/><path d="M4.90 0.40 L7.70 0.40 L7.70 1.25 L6.09 3.05 L7.70 3.05 L7.70 3.90 L4.90 3.90 L4.90 3.05 L6.51 1.25 L4.90 1.25 Z" fill="#2e2e2e"/></svg>
<span class="t lk" style="left:300.50px;top:135.60px;font-size:6.85px;">contrôle des sauvegardes</span>
<span class="t " style="left:408.10px;top:135.60px;font-size:6.85px;">Autre</span>
<span class="t " style="left:515.80px;top:135.60px;font-size:6.85px;">Problème logiciel</span>
<span class="t " style="left:611.70px;top:135.60px;font-size:6.85px;">Normal</span>
<span class="t " style="left:700.60px;top:135.60px;font-size:6.85px;">0</span>
<span class="t lk" style="left:748.70px;top:135.60px;font-size:6.85px;">Démo</span>
<span class="t lk" style="left:879.50px;top:135.60px;font-size:6.85px;">davy</span>
<span class="t " style="left:121.90px;top:152.30px;font-size:6.85px;">19/10/2016 20:25</span>
<span class="t " style="left:250.70px;top:153.30px;font-size:6.85px;">Assigné</span>
<svg style="position:absolute;left:240.8px;top:150.29999999999998px;" width="7.6" height="9.2" viewBox="0 0 7.6 9.2"><circle cx="3.8" cy="2.7" r="2.5" fill="#353535"/><path d="M0.1 9.1 Q0.2 5.6 2 4.8 Q3.8 5.8 5.6 4.8 Q7.4 5.6 7.5 9.1 Z" fill="#353535"/></svg>
<span class="t lk" style="left:300.50px;top:152.30px;font-size:6.85px;">test</span>
<span class="t " style="left:408.10px;top:152.30px;font-size:6.85px;">Demande d'information</span>
<span class="t " style="left:515.80px;top:152.30px;font-size:6.85px;">Problème logiciel</span>
<span class="t " style="left:611.70px;top:152.30px;font-size:6.85px;">Urgent/bloquant</span>
<span class="t " style="left:700.60px;top:152.30px;font-size:6.85px;">100</span>
<span class="t lk" style="left:748.70px;top:152.30px;font-size:6.85px;">yassir abdel</span>
<span class="t lk" style="left:879.50px;top:152.30px;font-size:6.85px;;letter-spacing:-0.197px">Eric DURAND</span>
<span class="t " style="left:121.90px;top:169.00px;font-size:6.85px;">13/10/2016 12:08</span>
<span class="t " style="left:250.70px;top:170.00px;font-size:6.85px;">Lu</span>
<svg style="position:absolute;left:240.8px;top:167.9px;" width="8.2" height="7.8" viewBox="0 0 8.2 7.8"><path d="M0.4 4.2 L1.6 3.3 L3 5 L7 0.2 L8 0.9 L3.2 7.6 Z" fill="#2a2a2a"/></svg>
<span class="t lk" style="left:300.50px;top:169.00px;font-size:6.85px;">Test</span>
<span class="t " style="left:408.10px;top:169.00px;font-size:6.85px;">Demande d'information</span>
<span class="t " style="left:515.80px;top:169.00px;font-size:6.85px;">Support commercial</span>
<span class="t " style="left:611.70px;top:169.00px;font-size:6.85px;">Normal</span>
<span class="t " style="left:700.60px;top:169.00px;font-size:6.85px;">0</span>
<span class="t lk" style="left:748.70px;top:169.00px;font-size:6.85px;">Démo</span>
<span class="t lk" style="left:879.50px;top:169.00px;font-size:6.85px;">davy</span>
<span class="t " style="left:121.90px;top:185.70px;font-size:6.85px;">28/09/2016 17:45</span>
<span class="t " style="left:250.70px;top:186.70px;font-size:6.85px;">Répondu</span>
<svg style="position:absolute;left:240.3px;top:183.8px;" width="9" height="9.2" viewBox="0 0 9 9.2"><rect x="0.85" y="0.6" width="6.6" height="8" fill="#fff" stroke="#727272" stroke-width="0.9"/><rect x="1.7" y="1.6" width="5" height="0.9" fill="#9c9c9c"/><rect x="1.7" y="3.2" width="5" height="1.8" fill="#c4c4c4"/><path d="M3.2 6.2 L4.1 5.4 L5 6.5 L7.8 3.4 L8.8 4.2 L5.1 8 Z" fill="#3a3a3a"/></svg>
<span class="t lk" style="left:300.50px;top:185.70px;font-size:6.85px;">Rrtt</span>
<span class="t " style="left:408.10px;top:185.70px;font-size:6.85px;">Demande d'information</span>
<span class="t " style="left:515.80px;top:185.70px;font-size:6.85px;">Problème logiciel</span>
<span class="t " style="left:611.70px;top:185.70px;font-size:6.85px;">Normal</span>
<span class="t " style="left:700.60px;top:185.70px;font-size:6.85px;">0</span>
<span class="t lk" style="left:748.70px;top:185.70px;font-size:6.85px;">Démo</span>
<span class="t lk" style="left:879.50px;top:185.70px;font-size:6.85px;">davy</span>
<span class="t " style="left:121.90px;top:202.40px;font-size:6.85px;">26/09/2016 09:55</span>
<span class="t " style="left:250.70px;top:203.40px;font-size:6.85px;">Assigné</span>
<svg style="position:absolute;left:240.8px;top:200.39999999999998px;" width="7.6" height="9.2" viewBox="0 0 7.6 9.2"><circle cx="3.8" cy="2.7" r="2.5" fill="#353535"/><path d="M0.1 9.1 Q0.2 5.6 2 4.8 Q3.8 5.8 5.6 4.8 Q7.4 5.6 7.5 9.1 Z" fill="#353535"/></svg>
<span class="t lk" style="left:300.50px;top:202.40px;font-size:6.85px;;letter-spacing:-0.310px">TEST</span>
<span class="t " style="left:408.10px;top:202.40px;font-size:6.85px;">Demande d'information</span>
<span class="t " style="left:515.80px;top:202.40px;font-size:6.85px;">Problème logiciel</span>
<span class="t " style="left:611.70px;top:202.40px;font-size:6.85px;">Normal</span>
<span class="t " style="left:700.60px;top:202.40px;font-size:6.85px;">0</span>
<span class="t lk" style="left:748.70px;top:202.40px;font-size:6.85px;">Démo</span>
<span class="t lk" style="left:879.50px;top:202.40px;font-size:6.85px;">abdel yassir</span>
<span class="t " style="left:121.90px;top:219.10px;font-size:6.85px;">22/08/2016 14:47</span>
<span class="t " style="left:250.70px;top:220.10px;font-size:6.85px;">Assigné</span>
<svg style="position:absolute;left:240.8px;top:217.09999999999997px;" width="7.6" height="9.2" viewBox="0 0 7.6 9.2"><circle cx="3.8" cy="2.7" r="2.5" fill="#353535"/><path d="M0.1 9.1 Q0.2 5.6 2 4.8 Q3.8 5.8 5.6 4.8 Q7.4 5.6 7.5 9.1 Z" fill="#353535"/></svg>
<span class="t lk" style="left:300.50px;top:219.10px;font-size:6.85px;">test ticket emmanuel</span>
<span class="t " style="left:408.10px;top:219.10px;font-size:6.85px;">Suivi projet</span>
<span class="t " style="left:515.80px;top:219.10px;font-size:6.85px;">Support commercial</span>
<span class="t " style="left:611.70px;top:219.10px;font-size:6.85px;">Urgent/bloquant</span>
<span class="t " style="left:700.60px;top:219.10px;font-size:6.85px;">100</span>
<span class="t lk" style="left:748.70px;top:219.10px;font-size:6.85px;">Lulu Bel</span>
<span class="t lk" style="left:879.50px;top:219.10px;font-size:6.85px;">Dupont &amp; Dupond</span>
<span class="t " style="left:121.90px;top:235.80px;font-size:6.85px;">12/08/2016 14:47</span>
<span class="t " style="left:250.70px;top:236.80px;font-size:6.85px;">Lu</span>
<svg style="position:absolute;left:240.8px;top:234.7px;" width="8.2" height="7.8" viewBox="0 0 8.2 7.8"><path d="M0.4 4.2 L1.6 3.3 L3 5 L7 0.2 L8 0.9 L3.2 7.6 Z" fill="#2a2a2a"/></svg>
<span class="t lk" style="left:300.50px;top:235.80px;font-size:6.85px;">Panne</span>
<span class="t " style="left:408.10px;top:235.80px;font-size:6.85px;">Demande d'assistance</span>
<span class="t " style="left:515.80px;top:235.80px;font-size:6.85px;">Problème logiciel</span>
<span class="t " style="left:611.70px;top:235.80px;font-size:6.85px;">Urgent/bloquant</span>
<span class="t " style="left:700.60px;top:235.80px;font-size:6.85px;">0</span>
<span class="t lk" style="left:748.70px;top:235.80px;font-size:6.85px;">Démo</span>
<span class="t lk" style="left:879.50px;top:235.80px;font-size:6.85px;">Client 1</span>
<span class="t " style="left:121.90px;top:252.50px;font-size:6.85px;">28/07/2016 06:59</span>
<span class="t " style="left:250.70px;top:253.50px;font-size:6.85px;">Assigné</span>
<svg style="position:absolute;left:240.8px;top:250.5px;" width="7.6" height="9.2" viewBox="0 0 7.6 9.2"><circle cx="3.8" cy="2.7" r="2.5" fill="#353535"/><path d="M0.1 9.1 Q0.2 5.6 2 4.8 Q3.8 5.8 5.6 4.8 Q7.4 5.6 7.5 9.1 Z" fill="#353535"/></svg>
<span class="t lk" style="left:300.50px;top:252.50px;font-size:6.85px;">Test</span>
<span class="t " style="left:408.10px;top:252.50px;font-size:6.85px;">Suivi projet</span>
<span class="t " style="left:515.80px;top:252.50px;font-size:6.85px;">Problème logiciel</span>
<span class="t " style="left:611.70px;top:252.50px;font-size:6.85px;">Normal</span>
<span class="t " style="left:700.60px;top:252.50px;font-size:6.85px;">0</span>
<span class="t lk" style="left:748.70px;top:252.50px;font-size:6.85px;">Démo</span>
<span class="t lk" style="left:879.50px;top:252.50px;font-size:6.85px;">abdel yassir</span>
<span class="t " style="left:121.90px;top:269.20px;font-size:6.85px;">02/06/2016 15:35</span>
<span class="t " style="left:250.70px;top:270.20px;font-size:6.85px;">Clôturé</span>
<svg style="position:absolute;left:240px;top:266.9px;" width="9.2" height="9" viewBox="0 0 9.2 9"><rect x="0.75" y="0.7" width="7" height="8" fill="#fafafa" stroke="#727272" stroke-width="0.9"/><rect x="1.8" y="2.6" width="4.4" height="3.8" fill="#c2c2c2"/><path d="M6.2 3.8 L6.2 2.9 Q6.2 1.6 7.2 1.6 Q8.2 1.6 8.2 2.9 L8.2 3.8" fill="none" stroke="#3a3a3a" stroke-width="0.7"/><rect x="5.6" y="3.7" width="3.3" height="3.5" rx="0.5" fill="#2e2e2e"/><rect x="7.05" y="4.6" width="0.5" height="1.4" fill="#aaa"/></svg>
<span class="t lk" style="left:300.50px;top:269.20px;font-size:6.85px;">test</span>
<span class="t " style="left:408.10px;top:269.20px;font-size:6.85px;">Demande d'information</span>
<span class="t " style="left:515.80px;top:269.20px;font-size:6.85px;">Problème logiciel</span>
<span class="t " style="left:611.70px;top:269.20px;font-size:6.85px;">Normal</span>
<span class="t " style="left:700.60px;top:269.20px;font-size:6.85px;">100</span>
<span class="t lk" style="left:748.70px;top:269.20px;font-size:6.85px;">Démo</span>
<span class="t lk" style="left:879.50px;top:269.20px;font-size:6.85px;">abdel yassir</span>
<span class="t " style="left:121.90px;top:285.90px;font-size:6.85px;">27/05/2016 15:04</span>
<span class="t " style="left:250.70px;top:286.90px;font-size:6.85px;">Assigné</span>
<svg style="position:absolute;left:240.8px;top:283.9px;" width="7.6" height="9.2" viewBox="0 0 7.6 9.2"><circle cx="3.8" cy="2.7" r="2.5" fill="#353535"/><path d="M0.1 9.1 Q0.2 5.6 2 4.8 Q3.8 5.8 5.6 4.8 Q7.4 5.6 7.5 9.1 Z" fill="#353535"/></svg>
<span class="t lk" style="left:300.50px;top:285.90px;font-size:6.85px;">antenne wifi</span>
<span class="t " style="left:408.10px;top:285.90px;font-size:6.85px;">Demande d'information</span>
<span class="t " style="left:515.80px;top:285.90px;font-size:6.85px;">Problème logiciel</span>
<span class="t " style="left:611.70px;top:285.90px;font-size:6.85px;">Normal</span>
<span class="t " style="left:700.60px;top:285.90px;font-size:6.85px;">0</span>
<span class="t lk" style="left:748.70px;top:285.90px;font-size:6.85px;">Jeanne Foster</span>
<span class="t lk" style="left:879.50px;top:285.90px;font-size:6.85px;">davy</span>
<span class="t " style="left:121.90px;top:302.60px;font-size:6.85px;">27/05/2016 14:53</span>
<span class="t " style="left:250.70px;top:303.60px;font-size:6.85px;">Clôturé</span>
<svg style="position:absolute;left:240px;top:300.29999999999995px;" width="9.2" height="9" viewBox="0 0 9.2 9"><rect x="0.75" y="0.7" width="7" height="8" fill="#fafafa" stroke="#727272" stroke-width="0.9"/><rect x="1.8" y="2.6" width="4.4" height="3.8" fill="#c2c2c2"/><path d="M6.2 3.8 L6.2 2.9 Q6.2 1.6 7.2 1.6 Q8.2 1.6 8.2 2.9 L8.2 3.8" fill="none" stroke="#3a3a3a" stroke-width="0.7"/><rect x="5.6" y="3.7" width="3.3" height="3.5" rx="0.5" fill="#2e2e2e"/><rect x="7.05" y="4.6" width="0.5" height="1.4" fill="#aaa"/></svg>
<span class="t lk" style="left:300.50px;top:302.60px;font-size:6.85px;">pb ticket</span>
<span class="t " style="left:408.10px;top:302.60px;font-size:6.85px;">Demande d'information</span>
<span class="t " style="left:515.80px;top:302.60px;font-size:6.85px;">Problème logiciel</span>
<span class="t " style="left:611.70px;top:302.60px;font-size:6.85px;">Normal</span>
<span class="t " style="left:700.60px;top:302.60px;font-size:6.85px;">100</span>
<span class="t lk" style="left:748.70px;top:302.60px;font-size:6.85px;">eric legrand</span>
<span class="t lk" style="left:879.50px;top:302.60px;font-size:6.85px;;letter-spacing:-0.310px">FRUL</span>
<span class="t " style="left:121.90px;top:319.30px;font-size:6.85px;">27/05/2016 10:36</span>
<span class="t " style="left:250.70px;top:320.30px;font-size:6.85px;">Clôturé</span>
<svg style="position:absolute;left:240px;top:316.99999999999994px;" width="9.2" height="9" viewBox="0 0 9.2 9"><rect x="0.75" y="0.7" width="7" height="8" fill="#fafafa" stroke="#727272" stroke-width="0.9"/><rect x="1.8" y="2.6" width="4.4" height="3.8" fill="#c2c2c2"/><path d="M6.2 3.8 L6.2 2.9 Q6.2 1.6 7.2 1.6 Q8.2 1.6 8.2 2.9 L8.2 3.8" fill="none" stroke="#3a3a3a" stroke-width="0.7"/><rect x="5.6" y="3.7" width="3.3" height="3.5" rx="0.5" fill="#2e2e2e"/><rect x="7.05" y="4.6" width="0.5" height="1.4" fill="#aaa"/></svg>
<span class="t lk" style="left:300.50px;top:319.30px;font-size:6.85px;">panne totale</span>
<span class="t " style="left:408.10px;top:319.30px;font-size:6.85px;">Demande d'assistance</span>
<span class="t " style="left:515.80px;top:319.30px;font-size:6.85px;">Problème hardware</span>
<span class="t " style="left:611.70px;top:319.30px;font-size:6.85px;">Urgent/bloquant</span>
<span class="t " style="left:700.60px;top:319.30px;font-size:6.85px;">100</span>
<span class="t lk" style="left:748.70px;top:319.30px;font-size:6.85px;">Démo</span>
<span class="t lk" style="left:879.50px;top:319.30px;font-size:6.85px;;letter-spacing:-0.284px">CHATEAU TRUC</span>
<span class="t " style="left:121.90px;top:336.00px;font-size:6.85px;">27/05/2016 09:54</span>
<span class="t " style="left:250.70px;top:337.00px;font-size:6.85px;">Répondu</span>
<svg style="position:absolute;left:240.3px;top:334.1px;" width="9" height="9.2" viewBox="0 0 9 9.2"><rect x="0.85" y="0.6" width="6.6" height="8" fill="#fff" stroke="#727272" stroke-width="0.9"/><rect x="1.7" y="1.6" width="5" height="0.9" fill="#9c9c9c"/><rect x="1.7" y="3.2" width="5" height="1.8" fill="#c4c4c4"/><path d="M3.2 6.2 L4.1 5.4 L5 6.5 L7.8 3.4 L8.8 4.2 L5.1 8 Z" fill="#3a3a3a"/></svg>
<span class="t lk" style="left:300.50px;top:336.00px;font-size:6.85px;">Demandeur plaquette</span>
<span class="t " style="left:408.10px;top:336.00px;font-size:6.85px;">Demande d'information</span>
<span class="t " style="left:515.80px;top:336.00px;font-size:6.85px;">Support commercial</span>
<span class="t " style="left:611.70px;top:336.00px;font-size:6.85px;">Normal</span>
<span class="t " style="left:700.60px;top:336.00px;font-size:6.85px;">100</span>
<span class="t lk" style="left:748.70px;top:336.00px;font-size:6.85px;;letter-spacing:-0.073px">Jean Marc Le Goff</span>
<span class="t lk" style="left:879.50px;top:336.00px;font-size:6.85px;;letter-spacing:-0.284px">CHATEAU TRUC</span>
<span class="t " style="left:121.90px;top:352.70px;font-size:6.85px;">27/05/2016 09:54</span>
<span class="t " style="left:250.70px;top:353.70px;font-size:6.85px;">Assigné</span>
<svg style="position:absolute;left:240.8px;top:350.7px;" width="7.6" height="9.2" viewBox="0 0 7.6 9.2"><circle cx="3.8" cy="2.7" r="2.5" fill="#353535"/><path d="M0.1 9.1 Q0.2 5.6 2 4.8 Q3.8 5.8 5.6 4.8 Q7.4 5.6 7.5 9.1 Z" fill="#353535"/></svg>
<span class="t lk" style="left:300.50px;top:352.70px;font-size:6.85px;">Demandeur plaquette</span>
<span class="t " style="left:408.10px;top:352.70px;font-size:6.85px;">Demande d'information</span>
<span class="t " style="left:515.80px;top:352.70px;font-size:6.85px;">Problème logiciel</span>
<span class="t " style="left:611.70px;top:352.70px;font-size:6.85px;">Normal</span>
<span class="t " style="left:700.60px;top:352.70px;font-size:6.85px;">0</span>
<span class="t lk" style="left:748.70px;top:352.70px;font-size:6.85px;">Démo</span>
<span class="t lk" style="left:879.50px;top:352.70px;font-size:6.85px;;letter-spacing:-0.284px">CHATEAU TRUC</span>
<span class="t " style="left:121.90px;top:369.40px;font-size:6.85px;">06/04/2016 07:51</span>
<span class="t " style="left:250.70px;top:370.40px;font-size:6.85px;">Assigné</span>
<svg style="position:absolute;left:240.8px;top:367.4px;" width="7.6" height="9.2" viewBox="0 0 7.6 9.2"><circle cx="3.8" cy="2.7" r="2.5" fill="#353535"/><path d="M0.1 9.1 Q0.2 5.6 2 4.8 Q3.8 5.8 5.6 4.8 Q7.4 5.6 7.5 9.1 Z" fill="#353535"/></svg>
<span class="t lk" style="left:300.50px;top:369.40px;font-size:6.85px;">PB test 00</span>
<span class="t " style="left:408.10px;top:369.40px;font-size:6.85px;">Demande d'information</span>
<span class="t " style="left:515.80px;top:369.40px;font-size:6.85px;">Problème hardware</span>
<span class="t " style="left:611.70px;top:369.40px;font-size:6.85px;">Normal</span>
<span class="t " style="left:700.60px;top:369.40px;font-size:6.85px;">0</span>
<span class="t lk" style="left:748.70px;top:369.40px;font-size:6.85px;">Démo</span>
<span class="t lk" style="left:879.50px;top:369.40px;font-size:6.85px;;letter-spacing:-0.284px">CHATEAU TRUC</span>
<span class="t " style="left:121.90px;top:386.10px;font-size:6.85px;">02/04/2016 22:33</span>
<span class="t " style="left:250.70px;top:387.10px;font-size:6.85px;">Assigné</span>
<svg style="position:absolute;left:240.8px;top:384.09999999999997px;" width="7.6" height="9.2" viewBox="0 0 7.6 9.2"><circle cx="3.8" cy="2.7" r="2.5" fill="#353535"/><path d="M0.1 9.1 Q0.2 5.6 2 4.8 Q3.8 5.8 5.6 4.8 Q7.4 5.6 7.5 9.1 Z" fill="#353535"/></svg>
<span class="t lk" style="left:300.50px;top:386.10px;font-size:6.85px;">wxcwx&lt;</span>
<span class="t " style="left:408.10px;top:386.10px;font-size:6.85px;">Demande d'information</span>
<span class="t " style="left:515.80px;top:386.10px;font-size:6.85px;">Problème logiciel</span>
<span class="t " style="left:611.70px;top:386.10px;font-size:6.85px;">Normal</span>
<span class="t " style="left:700.60px;top:386.10px;font-size:6.85px;">0</span>
<span class="t lk" style="left:748.70px;top:386.10px;font-size:6.85px;">Démo</span>
<span class="t lk" style="left:879.50px;top:386.10px;font-size:6.85px;;letter-spacing:-0.310px">FRUL</span>
<span class="t " style="left:121.90px;top:402.80px;font-size:6.85px;">02/04/2016 22:24</span>
<span class="t " style="left:250.70px;top:403.80px;font-size:6.85px;">Lu</span>
<svg style="position:absolute;left:240.8px;top:401.7px;" width="8.2" height="7.8" viewBox="0 0 8.2 7.8"><path d="M0.4 4.2 L1.6 3.3 L3 5 L7 0.2 L8 0.9 L3.2 7.6 Z" fill="#2a2a2a"/></svg>
<span class="t lk" style="left:300.50px;top:402.80px;font-size:6.85px;">gfdgdfgfd</span>
<span class="t " style="left:408.10px;top:402.80px;font-size:6.85px;">Demande d'assistance</span>
<span class="t " style="left:515.80px;top:402.80px;font-size:6.85px;">Support commercial</span>
<span class="t " style="left:611.70px;top:402.80px;font-size:6.85px;">Urgent/bloquant</span>
<span class="t " style="left:700.60px;top:402.80px;font-size:6.85px;">0</span>
<span class="t lk" style="left:748.70px;top:402.80px;font-size:6.85px;">Démo</span>
<span class="t lk" style="left:879.50px;top:402.80px;font-size:6.85px;;letter-spacing:-0.197px">Eric DURAND</span>
<span class="t " style="left:121.90px;top:419.50px;font-size:6.85px;">30/03/2016 19:52</span>
<span class="t " style="left:250.70px;top:420.50px;font-size:6.85px;">Assigné</span>
<svg style="position:absolute;left:240.8px;top:417.49999999999994px;" width="7.6" height="9.2" viewBox="0 0 7.6 9.2"><circle cx="3.8" cy="2.7" r="2.5" fill="#353535"/><path d="M0.1 9.1 Q0.2 5.6 2 4.8 Q3.8 5.8 5.6 4.8 Q7.4 5.6 7.5 9.1 Z" fill="#353535"/></svg>
<span class="t lk" style="left:300.50px;top:419.50px;font-size:6.85px;">Problème logiciel</span>
<span class="t " style="left:408.10px;top:419.50px;font-size:6.85px;">Suivi projet</span>
<span class="t " style="left:515.80px;top:419.50px;font-size:6.85px;">Support commercial</span>
<span class="t " style="left:611.70px;top:419.50px;font-size:6.85px;">Normal</span>
<span class="t " style="left:700.60px;top:419.50px;font-size:6.85px;">0</span>
<span class="t lk" style="left:748.70px;top:419.50px;font-size:6.85px;">Démo</span>
<span class="t lk" style="left:879.50px;top:419.50px;font-size:6.85px;;letter-spacing:-0.284px">CHATEAU TRUC</span>
<span class="t " style="left:121.90px;top:436.20px;font-size:6.85px;">30/03/2016 19:52</span>
<span class="t " style="left:250.70px;top:437.20px;font-size:6.85px;">Assigné</span>
<svg style="position:absolute;left:240.8px;top:434.2px;" width="7.6" height="9.2" viewBox="0 0 7.6 9.2"><circle cx="3.8" cy="2.7" r="2.5" fill="#353535"/><path d="M0.1 9.1 Q0.2 5.6 2 4.8 Q3.8 5.8 5.6 4.8 Q7.4 5.6 7.5 9.1 Z" fill="#353535"/></svg>
<span class="t lk" style="left:300.50px;top:436.20px;font-size:6.85px;">Problème logiciel</span>
<span class="t " style="left:408.10px;top:436.20px;font-size:6.85px;">Suivi projet</span>
<span class="t " style="left:515.80px;top:436.20px;font-size:6.85px;">Support commercial</span>
<span class="t " style="left:611.70px;top:436.20px;font-size:6.85px;">Normal</span>
<span class="t " style="left:700.60px;top:436.20px;font-size:6.85px;">0</span>
<span class="t lk" style="left:748.70px;top:436.20px;font-size:6.85px;">Démo</span>
<span class="t lk" style="left:879.50px;top:436.20px;font-size:6.85px;;letter-spacing:-0.284px">CHATEAU TRUC</span>
<span class="t " style="left:121.90px;top:452.90px;font-size:6.85px;">30/03/2016 15:08</span>
<span class="t " style="left:250.70px;top:453.90px;font-size:6.85px;">Assigné</span>
<svg style="position:absolute;left:240.8px;top:450.9px;" width="7.6" height="9.2" viewBox="0 0 7.6 9.2"><circle cx="3.8" cy="2.7" r="2.5" fill="#353535"/><path d="M0.1 9.1 Q0.2 5.6 2 4.8 Q3.8 5.8 5.6 4.8 Q7.4 5.6 7.5 9.1 Z" fill="#353535"/></svg>
<span class="t lk" style="left:300.50px;top:452.90px;font-size:6.85px;">hgfgfd</span>
<span class="t " style="left:408.10px;top:452.90px;font-size:6.85px;">Demande d'information</span>
<span class="t " style="left:515.80px;top:452.90px;font-size:6.85px;">Problème logiciel</span>
<span class="t " style="left:611.70px;top:452.90px;font-size:6.85px;">Normal</span>
<span class="t " style="left:700.60px;top:452.90px;font-size:6.85px;">0</span>
<span class="t lk" style="left:748.70px;top:452.90px;font-size:6.85px;">Démo</span>
<span class="t lk" style="left:879.50px;top:452.90px;font-size:6.85px;">davy</span>
<span class="t " style="left:121.90px;top:469.60px;font-size:6.85px;">24/03/2016 21:09</span>
<span class="t " style="left:250.70px;top:470.60px;font-size:6.85px;">Répondu</span>
<svg style="position:absolute;left:240.3px;top:467.7px;" width="9" height="9.2" viewBox="0 0 9 9.2"><rect x="0.85" y="0.6" width="6.6" height="8" fill="#fff" stroke="#727272" stroke-width="0.9"/><rect x="1.7" y="1.6" width="5" height="0.9" fill="#9c9c9c"/><rect x="1.7" y="3.2" width="5" height="1.8" fill="#c4c4c4"/><path d="M3.2 6.2 L4.1 5.4 L5 6.5 L7.8 3.4 L8.8 4.2 L5.1 8 Z" fill="#3a3a3a"/></svg>
<span class="t lk" style="left:300.50px;top:469.60px;font-size:6.85px;">Scanner ne répond plus</span>
<span class="t " style="left:408.10px;top:469.60px;font-size:6.85px;">Demande d'assistance</span>
<span class="t " style="left:515.80px;top:469.60px;font-size:6.85px;">Problème hardware</span>
<span class="t " style="left:611.70px;top:469.60px;font-size:6.85px;">Critique / bloquant</span>
<span class="t " style="left:700.60px;top:469.60px;font-size:6.85px;">0</span>
<span class="t lk" style="left:748.70px;top:469.60px;font-size:6.85px;">Démo</span>
<span class="t lk" style="left:879.50px;top:469.60px;font-size:6.85px;">Dupont &amp; Dupond</span>
<span class="t " style="left:121.90px;top:486.30px;font-size:6.85px;">24/03/2016 12:08</span>
<span class="t " style="left:250.70px;top:487.30px;font-size:6.85px;">Clôturé</span>
<svg style="position:absolute;left:240px;top:483.99999999999994px;" width="9.2" height="9" viewBox="0 0 9.2 9"><rect x="0.75" y="0.7" width="7" height="8" fill="#fafafa" stroke="#727272" stroke-width="0.9"/><rect x="1.8" y="2.6" width="4.4" height="3.8" fill="#c2c2c2"/><path d="M6.2 3.8 L6.2 2.9 Q6.2 1.6 7.2 1.6 Q8.2 1.6 8.2 2.9 L8.2 3.8" fill="none" stroke="#3a3a3a" stroke-width="0.7"/><rect x="5.6" y="3.7" width="3.3" height="3.5" rx="0.5" fill="#2e2e2e"/><rect x="7.05" y="4.6" width="0.5" height="1.4" fill="#aaa"/></svg>
<span class="t lk" style="left:300.50px;top:486.30px;font-size:6.85px;;letter-spacing:-0.039px">Problème Souris Logitech</span>
<span class="t " style="left:408.10px;top:486.30px;font-size:6.85px;">Demande d'information</span>
<span class="t " style="left:515.80px;top:486.30px;font-size:6.85px;">Problème logiciel</span>
<span class="t " style="left:611.70px;top:486.30px;font-size:6.85px;">Normal</span>
<span class="t " style="left:700.60px;top:486.30px;font-size:6.85px;">100</span>
<span class="t lk" style="left:748.70px;top:486.30px;font-size:6.85px;">Jeanne Foster</span>
<span class="t lk" style="left:879.50px;top:486.30px;font-size:6.85px;">Dupont &amp; Dupond</span>
<span class="t " style="left:121.90px;top:503.00px;font-size:6.85px;">23/03/2016 21:26</span>
<span class="t " style="left:250.70px;top:504.00px;font-size:6.85px;">Clôturé</span>
<svg style="position:absolute;left:240px;top:500.69999999999993px;" width="9.2" height="9" viewBox="0 0 9.2 9"><rect x="0.75" y="0.7" width="7" height="8" fill="#fafafa" stroke="#727272" stroke-width="0.9"/><rect x="1.8" y="2.6" width="4.4" height="3.8" fill="#c2c2c2"/><path d="M6.2 3.8 L6.2 2.9 Q6.2 1.6 7.2 1.6 Q8.2 1.6 8.2 2.9 L8.2 3.8" fill="none" stroke="#3a3a3a" stroke-width="0.7"/><rect x="5.6" y="3.7" width="3.3" height="3.5" rx="0.5" fill="#2e2e2e"/><rect x="7.05" y="4.6" width="0.5" height="1.4" fill="#aaa"/></svg>
<span class="t lk" style="left:300.50px;top:503.00px;font-size:6.85px;;letter-spacing:-0.077px">Problème PC Dell</span>
<span class="t " style="left:408.10px;top:503.00px;font-size:6.85px;">Demande d'information</span>
<span class="t " style="left:515.80px;top:503.00px;font-size:6.85px;">Problème hardware</span>
<span class="t " style="left:611.70px;top:503.00px;font-size:6.85px;">Normal</span>
<span class="t " style="left:700.60px;top:503.00px;font-size:6.85px;">100</span>
<span class="t lk" style="left:748.70px;top:503.00px;font-size:6.85px;">Lulu Bel</span>
<span class="t lk" style="left:879.50px;top:503.00px;font-size:6.85px;">Le Gauff alain</span>
<span class="t " style="left:121.90px;top:519.70px;font-size:6.85px;">17/03/2016 10:12</span>
<span class="t " style="left:250.70px;top:520.70px;font-size:6.85px;">Assigné</span>
<svg style="position:absolute;left:240.8px;top:517.7px;" width="7.6" height="9.2" viewBox="0 0 7.6 9.2"><circle cx="3.8" cy="2.7" r="2.5" fill="#353535"/><path d="M0.1 9.1 Q0.2 5.6 2 4.8 Q3.8 5.8 5.6 4.8 Q7.4 5.6 7.5 9.1 Z" fill="#353535"/></svg>
<span class="t lk" style="left:300.50px;top:519.70px;font-size:6.85px;">Test</span>
<span class="t " style="left:408.10px;top:519.70px;font-size:6.85px;">Suivi projet</span>
<span class="t " style="left:515.80px;top:519.70px;font-size:6.85px;">Problème hardware</span>
<span class="t " style="left:611.70px;top:519.70px;font-size:6.85px;">Urgent/bloquant</span>
<span class="t " style="left:700.60px;top:519.70px;font-size:6.85px;">0</span>
<span class="t lk" style="left:748.70px;top:519.70px;font-size:6.85px;">Joe Joe</span>
<span class="t lk" style="left:879.50px;top:519.70px;font-size:6.85px;">Financeur</span>
<div class="abs" style="left:954px;top:542.1px;width:56.8px;height:20.2px;border:1px solid #cfcfcf;border-radius:2px;background:linear-gradient(#fbfbfb,#e6e6e6);box-shadow:0 1px 1px rgba(0,0,0,0.08)"></div>
<span class="t " style="left:952.40px;width:60px;text-align:center;top:548.90px;font-size:6.85px;color:#3a3a3a">Nouveau ticket</span>
</div></body></html>
